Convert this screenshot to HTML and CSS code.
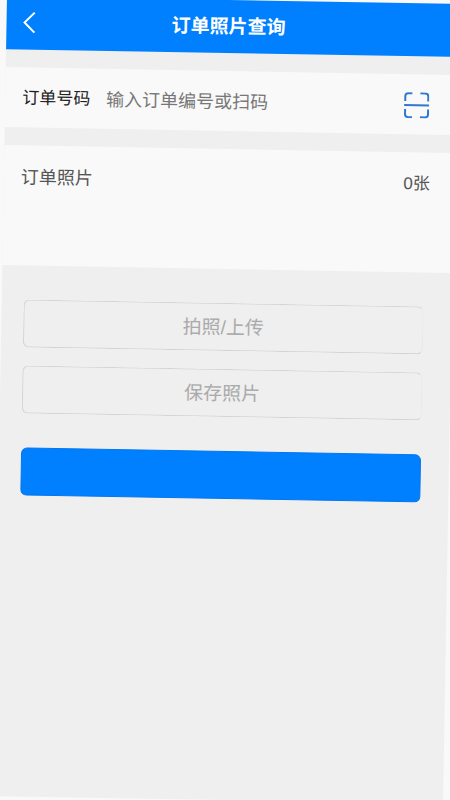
FILE: index.html
```
<!DOCTYPE html>
<html lang="zh-CN">
<head>
  <meta charset="UTF-8" />
  <title>订单照片查询</title>
  <meta name="viewport" content="width=device-width, initial-scale=1.0"/>
  <link rel="stylesheet" href="styles.css">
</head>
<body>

  <div class="page">

    <!-- Header -->
    <header class="header">
      <button class="back" type="button" aria-label="返回">
        <svg width="14" height="22" viewBox="0 0 14 22" fill="none" stroke="currentColor" stroke-width="2">
          <path d="M12 1 L2 11 L12 21"/>
        </svg>
      </button>
      <h1>订单照片查询</h1>
    </header>

    <main>
      <!-- Order number -->
      <div class="card order">
        <label for="orderNo">订单号码</label>
        <input type="text" id="orderNo" placeholder="输入订单编号或扫码" />
        <button class="scan" type="button" aria-label="扫码">
          <svg width="26" height="26" viewBox="0 0 26 26" fill="none" stroke="currentColor" stroke-width="2">
            <path d="M2 9 V4 Q2 1 5 1 H9 M17 1 H22 Q25 1 25 4 V9 M25 17 V22 Q25 25 22 25 H17 M9 25 H5 Q2 25 2 22 V17"/>
            <path d="M1 13 H26"/>
          </svg>
        </button>
      </div>

      <!-- Photos -->
      <section class="card photos">
        <h2>订单照片</h2>
        <span class="count">0张</span>
      </section>

      <!-- Actions -->
      <div class="actions">
        <button class="btn" type="button" disabled>拍照/上传</button>
        <button class="btn" type="button" disabled>保存照片</button>
        <button class="btn btn-primary" type="button" aria-label="查询"></button>
      </div>
    </main>

  </div>

</body>
</html>
```
FILE: styles.css
```
* { margin: 0; padding: 0; box-sizing: border-box; }
html { background: #f9f9f9; overflow: hidden; }
body { font-family: "Liberation Sans", "Noto Sans CJK SC", sans-serif; color: #444; overflow: hidden; }
button, input { font-family: inherit; border: none; background: none; }

.page { min-height: 100vh; background: #efefef; transform: rotate(1deg); }

.header {
  display: grid; grid-template-columns: 28px 1fr 28px; align-items: center;
  height: 53px; padding: 0 22px 2px 16px; background: #007fff; color: #fff;
}
.header h1 { font-size: 19px; line-height: 30px; padding-top: 2px; font-weight: 700; text-align: center; }
.back { display: flex; height: 28px; align-items: center; color: #fff; cursor: pointer; }

.card { display: flex; margin-top: 18px; padding: 0 26px 0 17px; background: #f9f9f9; }

.order { height: 60px; padding-top: 2px; align-items: center; gap: 16px; }
.order label { font-size: 17px; line-height: 24px; color: #222; white-space: nowrap; }
.order input { flex: 1; min-width: 0; height: 40px; font-size: 18px; color: #444; outline: none; }
.order input::placeholder { color: #777; opacity: 1; }
.scan { display: flex; color: #2f78cf; cursor: pointer; }

.photos { min-height: 120px; padding-top: 18px; padding-right: 24px; justify-content: space-between; align-items: flex-start; }
.photos h2 { font-size: 18px; line-height: 28px; font-weight: 400; color: #555; }
.count { font-size: 17px; line-height: 28px; color: #555; }

.actions { display: flex; flex-direction: column; gap: 18px; padding: 34px 28px 34px 22px; }
.btn { height: 48px; padding-bottom: 4px; border: 1px solid #d3d3d3; border-right-color: #e9e9e9; border-radius: 6px; font-size: 19px; color: #aaa; }
.btn-primary { margin-top: 16px; border-color: #0078ee; background: #007fff; cursor: pointer; }
```
